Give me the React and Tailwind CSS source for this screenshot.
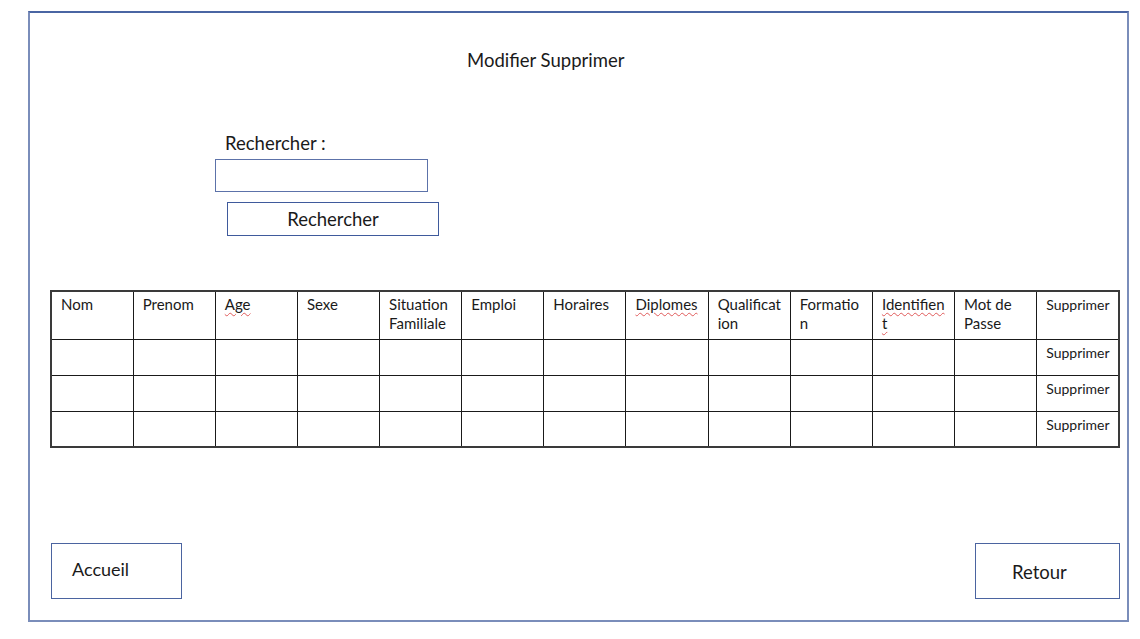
import React from "react";

const headers = [
  ["Nom"],
  ["Prenom"],
  ["Age", true],
  ["Sexe"],
  ["Situation", "Familiale"],
  ["Emploi"],
  ["Horaires"],
  ["Diplomes", true],
  ["Qualificat", "ion"],
  ["Formatio", "n"],
  ["Identifien", "t", true],
  ["Mot de", "Passe"],
];

function HeaderCell({ h }) {
  const lines = h.filter((x) => typeof x === "string");
  const squiggle = h.includes(true);
  return (
    <th className="border border-[#1a1a1a] align-top text-left font-normal pl-[9px] pt-[3px] text-[15px] leading-[19px] text-[#1a1a1a]">
      {lines.map((l, i) => (
        <div
          key={i}
          className={
            squiggle
              ? "underline decoration-wavy decoration-[#e05a5a] decoration-1 underline-offset-2"
              : ""
          }
        >
          <span>{l}</span>
        </div>
      ))}
    </th>
  );
}

export default function App() {
  return (
    <div
      className="bg-white w-[1140px] h-[639px] pt-[11px] pl-[28px]"
      style={{ fontFamily: "Lato, 'Noto Sans', sans-serif" }}
    >
      <div className="w-[1101px] h-[611px] border-2 border-[#7a8dba] border-t-[#4a65a3] flex flex-col">
        <div className="mt-[35px] ml-[437px] text-[18.5px] leading-[24px] text-[#1a1a1a]">
          Modifier Supprimer
        </div>
        <div className="mt-[59px] ml-[195px] text-[18.5px] leading-[24px] text-[#1a1a1a]">
          Rechercher :
        </div>
        <div className="mt-[4px] ml-[185px] w-[213px] h-[33px] border-[1.5px] border-[#5c72a9]"></div>
        <div className="mt-[10px] ml-[197px] w-[212px] h-[34px] border-[1.5px] border-[#3f5a9c] flex items-center justify-center text-[18.5px] pt-[1px] text-[#1a1a1a]">
          Rechercher
        </div>
        <table className="mt-[54px] ml-[20px] w-[1070px] table-fixed border-collapse border-2 border-[#3a3a3a]">
          <thead>
            <tr className="h-[48px]">
              {headers.map((h, i) => (
                <HeaderCell key={i} h={h} />
              ))}
              <th className="border border-[#1a1a1a] align-top text-left font-normal pl-[9px] pt-[3px] text-[14px] leading-[19px] text-[#1a1a1a]">
                Supprimer
              </th>
            </tr>
          </thead>
          <tbody>
            {[0, 1, 2].map((r) => (
              <tr key={r} className="h-[36px]">
                {headers.map((_, i) => (
                  <td key={i} className="border border-[#1a1a1a]"></td>
                ))}
                <td className="border border-[#1a1a1a] align-top pl-[9px] pt-[3px] text-[14px] leading-[19px] text-[#1a1a1a]">
                  Supprimer
                </td>
              </tr>
            ))}
          </tbody>
        </table>
        <div className="mt-[95px] ml-[21px] mr-[7px] flex justify-between">
          <div className="w-[131px] h-[56px] border-[1.5px] border-[#4b64a0] pl-[20px] pt-[13px] text-[18px] leading-[24px] text-[#1a1a1a]">
            Accueil
          </div>
          <div className="w-[145px] h-[56px] border-[1.5px] border-[#4b64a0] pl-[36px] pt-[16px] text-[18.5px] leading-[24px] text-[#1a1a1a]">
            Retour
          </div>
        </div>
      </div>
    </div>
  );
}
